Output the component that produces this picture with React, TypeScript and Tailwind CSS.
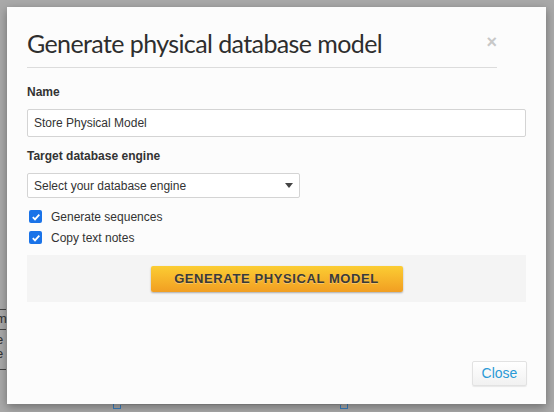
import React from "react";

export default function App() {
  return (
    <div className="relative w-[554px] h-[412px] overflow-hidden bg-[#a9a9a9]" style={{ fontFamily: '"Liberation Sans", Arial, sans-serif' }}>
      {/* background page remnants */}
      <div className="absolute left-0 top-[309px] w-[6px] h-px bg-[#444]" />
      <div className="absolute left-0 top-[329px] w-[6px] h-px bg-[#444]" />
      <div className="absolute left-0 top-[369px] w-[6px] h-px bg-[#444]" />
      <div className="absolute left-[-4px] top-[311px] text-[13px] leading-[16px] text-[#333]">m</div>
      <div className="absolute left-[-4px] top-[332px] text-[13px] leading-[16px] text-[#333]">e</div>
      <div className="absolute left-[-4px] top-[346px] text-[13px] leading-[16px] text-[#333]">e</div>
      <div className="absolute left-[113px] top-[404px] w-[8px] h-[5px] border-x border-b border-[#3a7fc0]" />
      <div className="absolute left-[340px] top-[404px] w-[8px] h-[5px] border-x border-b border-[#3a7fc0]" />
      <div className="absolute left-[120px] top-[404px] w-[222px] h-px bg-[#9a9a9a]" />

      <div className="absolute left-[7px] top-[7px] w-[539px] h-[397px] bg-[#fcfcfc] shadow-[0_3px_9px_rgba(0,0,0,0.35)] flex flex-col">
        <div className="ml-[20px] mr-[49px] mt-[20px] flex items-start justify-between border-b border-[#dcdcdc] pb-[8px]">
          <h1 className="text-[25px] leading-[32px] text-[#2e2e2e] tracking-[-0.6px]" style={{ fontFamily: 'Lato, "Open Sans", sans-serif' }}>
            Generate physical database model
          </h1>
          <span className="mt-[6px] text-[18px] leading-[18px] font-bold text-[#c8c8c8]">×</span>
        </div>

        <div className="mx-[20px] mt-[16px] flex flex-col">
          <label className="text-[12px] leading-[16px] font-bold text-[#333]">Name</label>
          <div className="mt-[9px] h-[28px] w-[499px] border border-[#d4d4d4] bg-white rounded-[2px] flex items-center px-[6px] text-[12px] text-[#333]">
            Store Physical Model
          </div>
          <label className="mt-[11px] text-[12px] leading-[16px] font-bold text-[#333]">Target database engine</label>
          <div className="mt-[9px] h-[25px] w-[273px] border border-[#d4d4d4] bg-white rounded-[2px] flex items-center justify-between pl-[6px] pr-[6px] text-[12px] text-[#333]">
            <span>Select your database engine</span>
            <svg width="8" height="5" viewBox="0 0 8 5"><path d="M0 0h8L4 5z" fill="#444" /></svg>
          </div>
          <div className="mt-[12px] flex flex-col gap-[8px]">
            {["Generate sequences", "Copy text notes"].map((t) => (
              <div key={t} className="flex items-center h-[13px]">
                <span className="ml-[2px] w-[13px] h-[13px] rounded-[2px] bg-[#1a73e8] flex items-center justify-center">
                  <svg width="10" height="10" viewBox="0 0 10 10"><path d="M1.8 5.2 4 7.4 8.3 2.6" stroke="#fff" strokeWidth="1.8" fill="none" /></svg>
                </span>
                <span className="ml-[9px] text-[12px] text-[#333]">{t}</span>
              </div>
            ))}
          </div>
          <div className="mt-[11px] h-[47px] w-[499px] bg-[#f4f4f4] flex items-center justify-center">
            <button className="w-[252px] h-[26px] rounded-[2px] bg-gradient-to-b from-[#fbcd33] to-[#f19e22] shadow-[0_1px_2px_rgba(0,0,0,0.3)] text-[13px] font-bold text-[#3a3a3a] tracking-[0.6px]" style={{ textShadow: "0 1px 0 rgba(255,255,255,0.3)" }}>
              GENERATE PHYSICAL MODEL
            </button>
          </div>
        </div>

        <div className="mt-auto mb-[18px] mr-[19px] flex justify-end">
          <button className="w-[55px] h-[25px] rounded-[2px] border border-[#e2e2e2] bg-gradient-to-b from-white to-[#f1f1f1] text-[14px] text-[#2a9ad6] shadow-[0_1px_1px_rgba(0,0,0,0.08)]">
            Close
          </button>
        </div>
      </div>
    </div>
  );
}
